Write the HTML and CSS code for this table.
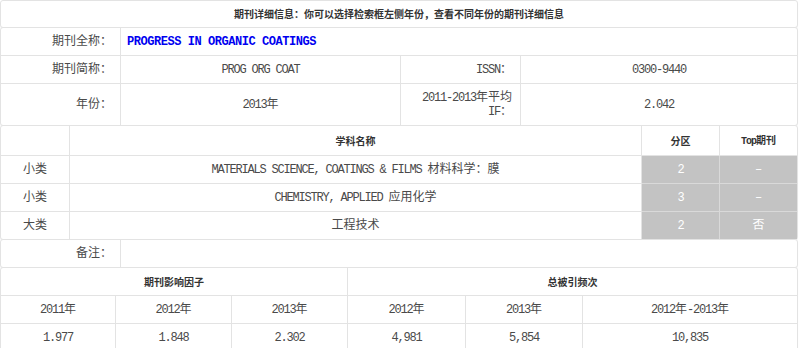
FILE: index.html
```html
<!DOCTYPE html>
<html lang="zh-CN">
<head>
<meta charset="utf-8">
<title>期刊详细信息</title>
<link rel="stylesheet" href="styles.css">
</head>
<body>
<div class="page">
  <div class="panel head">期刊详细信息：你可以选择检索框左侧年份，查看不同年份的期刊详细信息</div>

  <table class="panel info">
    <colgroup><col class="w120"><col class="w280"><col class="w120"><col></colgroup>
    <tr>
      <th class="lbl">期刊全称：</th>
      <td colspan="3" class="title"><span class="en">PROGRESS IN ORGANIC COATINGS</span></td>
    </tr>
    <tr>
      <th class="lbl">期刊简称：</th>
      <td><span class="en">PROG ORG COAT</span></td>
      <th class="lbl"><span class="en">ISSN</span>：</th>
      <td><span class="en">0300-9440</span></td>
    </tr>
    <tr class="last">
      <th class="lbl">年份：</th>
      <td><span class="en">2013</span>年</td>
      <th class="lbl"><span class="en">2011-2013</span>年平均<span class="en">IF</span>：</th>
      <td><span class="en">2.042</span></td>
    </tr>
  </table>

  <table class="panel subj">
    <colgroup><col class="w69"><col class="w572"><col class="w78"><col></colgroup>
    <tr class="hd">
      <th></th>
      <th>学科名称</th>
      <th>分区</th>
      <th><span class="en">Top</span>期刊</th>
    </tr>
    <tr>
      <td>小类</td>
      <td><span class="en">MATERIALS SCIENCE, COATINGS &amp; FILMS </span>材料科学：膜</td>
      <td class="grey"><span class="en">2</span></td>
      <td class="grey">–</td>
    </tr>
    <tr>
      <td>小类</td>
      <td><span class="en">CHEMISTRY, APPLIED </span>应用化学</td>
      <td class="grey"><span class="en">3</span></td>
      <td class="grey">–</td>
    </tr>
    <tr class="last">
      <td>大类</td>
      <td>工程技术</td>
      <td class="grey"><span class="en">2</span></td>
      <td class="grey">否</td>
    </tr>
  </table>

  <table class="panel note">
    <colgroup><col class="w120"><col></colgroup>
    <tr class="last">
      <th class="lbl">备注：</th>
      <td></td>
    </tr>
  </table>

  <table class="panel impact">
    <colgroup><col class="w115"><col class="w116"><col class="w116"><col class="w118"><col class="w117"><col></colgroup>
    <tr class="hd">
      <th colspan="3">期刊影响因子</th>
      <th colspan="3">总被引频次</th>
    </tr>
    <tr>
      <td><span class="en">2011</span>年</td>
      <td><span class="en">2012</span>年</td>
      <td><span class="en">2013</span>年</td>
      <td><span class="en">2012</span>年</td>
      <td><span class="en">2013</span>年</td>
      <td><span class="en">2012</span>年<span class="en">-2013</span>年</td>
    </tr>
    <tr class="last">
      <td><span class="en">1.977</span></td>
      <td><span class="en">1.848</span></td>
      <td><span class="en">2.302</span></td>
      <td><span class="en">4,981</span></td>
      <td><span class="en">5,854</span></td>
      <td><span class="en">10,835</span></td>
    </tr>
  </table>
</div>
</body>
</html>
```

FILE: styles.css
```css
* { box-sizing: border-box; }

body {
  margin: 0;
  background: #fff;
  color: #4a4a4a;
  font-family: "Liberation Mono", "Noto Sans CJK SC", monospace;
  font-size: 12px;
}

.page {
  width: 798px;
}

.en {
  letter-spacing: -1.2px;
}

.panel {
  width: 798px;
  border: 1px solid #e3e3e3;
  border-radius: 3px;
  box-shadow: 0 1px 1px rgba(0, 0, 0, 0.04);
  background: #fff;
}

.panel + .panel {
  margin-top: -1px;
}

table.panel {
  border-collapse: separate;
  border-spacing: 0;
  table-layout: fixed;
}

.head {
  height: 28px;
  line-height: 26px;
  text-align: center;
  font-family: "Noto Sans CJK SC", sans-serif;
  font-weight: bold;
  font-size: 10px;
  color: #333;
}

.w69 { width: 69px; }
.w78 { width: 78px; }
.w115 { width: 115px; }
.w116 { width: 116px; }
.w117 { width: 117px; }
.w118 { width: 118px; }
.w120 { width: 120px; }
.w280 { width: 280px; }
.w572 { width: 572px; }

th, td {
  padding: 7px 8px 6px;
  line-height: 14px;
  text-align: center;
  font-weight: normal;
  border-right: 1px solid #e3e3e3;
  border-bottom: 1px solid #e3e3e3;
  vertical-align: middle;
}

th:last-child, td:last-child {
  border-right: none;
}

tr.last th, tr.last td {
  border-bottom: none;
}

th.lbl {
  text-align: right;
  padding-right: 8px;
}

td.title {
  text-align: left;
  padding-left: 6px;
  color: #0000f0;
  font-weight: bold;
}

td.title .en {
  letter-spacing: -0.45px;
}

tr.hd th {
  font-family: "Noto Sans CJK SC", sans-serif;
  font-weight: bold;
  font-size: 10px;
  color: #333;
}

tr.hd th .en {
  font-family: "Liberation Mono", monospace;
  letter-spacing: -1px;
}

td.grey {
  background: #c3c3c3;
  color: #fff;
  border-right-color: #d9d9d9;
  border-bottom-color: #d9d9d9;
}

.note td {
  height: 27px;
}
```
